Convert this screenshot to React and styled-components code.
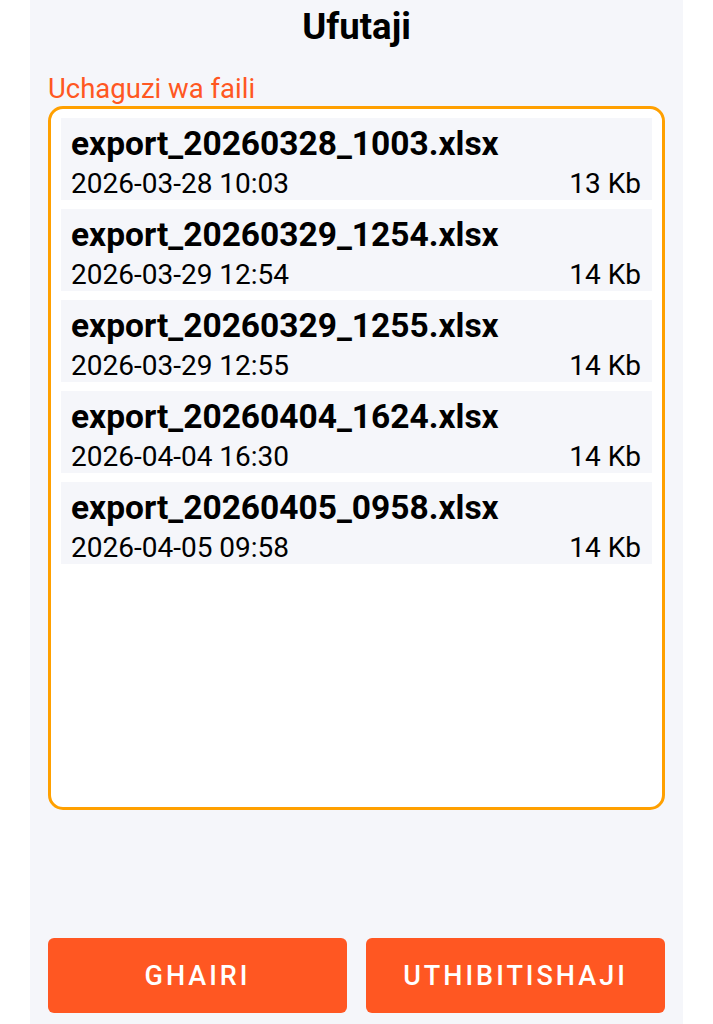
import React from "react";
import styled, { createGlobalStyle } from "styled-components";

const Global = createGlobalStyle`
  html, body { margin: 0; padding: 0; background: #ffffff; }
  body { font-family: Roboto, "Noto Sans", sans-serif; }
`;

const Panel = styled.div`
  margin-left: 30px;
  width: 653px;
  height: 1024px;
  background: #f5f6fa;
  box-sizing: border-box;
  padding: 0 18px 11px;
  display: flex;
  flex-direction: column;
`;

const Title = styled.h1`
  margin: 0;
  height: 54px;
  line-height: 54px;
  text-align: center;
  font-size: 36.5px;
  font-weight: 700;
  color: #000;
`;

const Label = styled.div`
  margin-top: 18px;
  height: 34px;
  line-height: 34px;
  font-size: 27.5px;
  color: #ff5722;
`;

const FileBox = styled.div`
  height: 704px;
  box-sizing: border-box;
  border: 3px solid #ffa000;
  border-radius: 15px;
  background: #ffffff;
  padding: 9px 10px;
  display: flex;
  flex-direction: column;
  gap: 9px;
`;

const Row = styled.div`
  height: 82px;
  box-sizing: border-box;
  background: #f5f6fa;
  padding: 8px 11px 0 10px;
  display: flex;
  flex-direction: column;
`;

const FileName = styled.div`
  font-size: 33.5px;
  font-weight: 700;
  color: #000;
  line-height: 36px;
  white-space: nowrap;
`;

const Meta = styled.div`
  margin-top: 6px;
  display: flex;
  justify-content: space-between;
  font-size: 28px;
  line-height: 32px;
  color: #000;
`;

const Spacer = styled.div`
  flex: 1;
`;

const Buttons = styled.div`
  display: flex;
  gap: 19px;
`;

const Button = styled.button`
  flex: 1;
  height: 75px;
  border: none;
  border-radius: 6px;
  background: #ff5722;
  color: #ffffff;
  font-family: Roboto, sans-serif;
  font-size: 27px;
  font-weight: 500;
  letter-spacing: 3px;
`;

const files = [
  ["export_20260328_1003.xlsx", "2026-03-28 10:03", "13 Kb"],
  ["export_20260329_1254.xlsx", "2026-03-29 12:54", "14 Kb"],
  ["export_20260329_1255.xlsx", "2026-03-29 12:55", "14 Kb"],
  ["export_20260404_1624.xlsx", "2026-04-04 16:30", "14 Kb"],
  ["export_20260405_0958.xlsx", "2026-04-05 09:58", "14 Kb"],
];

export default function App() {
  return (
    <>
      <Global />
      <Panel>
        <Title>Ufutaji</Title>
        <Label>Uchaguzi wa faili</Label>
        <FileBox>
          {files.map(([name, date, size]) => (
            <Row key={name}>
              <FileName>{name}</FileName>
              <Meta>
                <span>{date}</span>
                <span>{size}</span>
              </Meta>
            </Row>
          ))}
        </FileBox>
        <Spacer />
        <Buttons>
          <Button>GHAIRI</Button>
          <Button>UTHIBITISHAJI</Button>
        </Buttons>
      </Panel>
    </>
  );
}
